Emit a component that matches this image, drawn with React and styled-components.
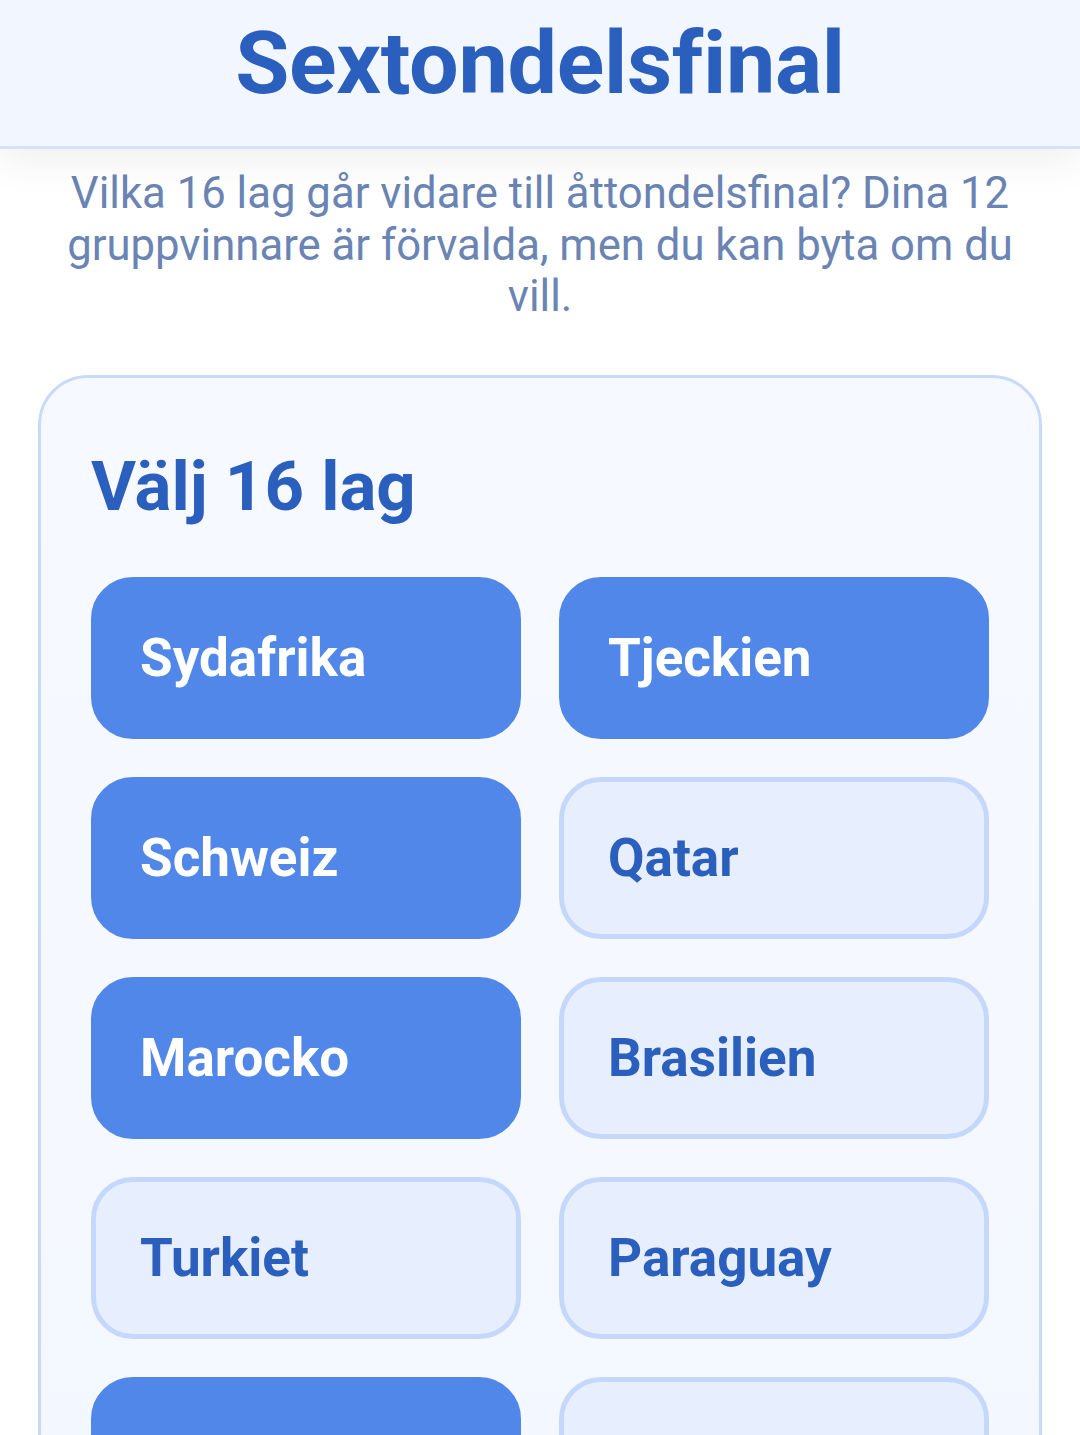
import React, { useState } from "react";
import styled, { createGlobalStyle } from "styled-components";

const Global = createGlobalStyle`
  html, body { margin: 0; padding: 0; background: #ffffff; }
  body { font-family: Roboto, "Noto Sans", "Liberation Sans", sans-serif; -webkit-font-smoothing: antialiased; }
  * { box-sizing: border-box; }
`;

const Page = styled.div`
  display: flex;
  flex-direction: column;
  min-height: 1435px;
  overflow: hidden;
`;

const Header = styled.header`
  position: relative;
  z-index: 1;
  background: #f2f7ff;
  border-bottom: 3px solid #d5e3fa;
  padding: 11px 20px 32px;
  box-shadow: 0 10px 40px rgba(0, 0, 0, 0.07);
  display: flex;
  justify-content: center;
`;

const Title = styled.h1`
  margin: 0;
  font-size: 88px;
  font-weight: 700;
  line-height: normal;
  color: #2b5fbd;
  letter-spacing: -0.3px;
`;

const Intro = styled.p`
  margin: 19px 0 0;
  padding: 0 44px;
  font-size: 43.7px;
  line-height: 51.5px;
  font-weight: 400;
  color: #6a84b3;
  text-align: center;
`;

const Card = styled.section`
  margin: 52px 38px 0;
  background: linear-gradient(#f6f9ff, #f3f7ff);
  border: 3px solid #c7dafb;
  border-radius: 50px;
  padding: 68px 50px 50px;
`;

const CardTitle = styled.h2`
  margin: 0 0 50px;
  font-size: 69px;
  font-weight: 700;
  line-height: normal;
  color: #2b5fbd;
`;

const Grid = styled.div`
  display: grid;
  grid-template-columns: minmax(0, 1fr) minmax(0, 1fr);
  gap: 38px;
`;

const TeamButton = styled.button`
  min-width: 0;
  height: 162px;
  border-radius: 42px;
  border: 5.5px solid ${(p) => (p.$selected ? "#5087e8" : "#c5d8fb")};
  background: ${(p) => (p.$selected ? "#5087e8" : "#e7effe")};
  color: ${(p) => (p.$selected ? "#ffffff" : "#2b5fbd")};
  font-family: inherit;
  font-size: 53px;
  font-weight: 700;
  text-align: left;
  padding: 0 44px;
  cursor: pointer;
  display: flex;
  align-items: center;
  overflow: hidden;
  white-space: nowrap;
`;

const teams = [
  { name: "Sydafrika", selected: true },
  { name: "Tjeckien", selected: true },
  { name: "Schweiz", selected: true },
  { name: "Qatar", selected: false },
  { name: "Marocko", selected: true },
  { name: "Brasilien", selected: false },
  { name: "Turkiet", selected: false },
  { name: "Paraguay", selected: false },
  { name: "Tyskland", selected: true },
  { name: "Ecuador", selected: false },
  { name: "Spanien", selected: true },
  { name: "Japan", selected: false },
];

export default function App() {
  const [state, setState] = useState(teams);
  const toggle = (i) =>
    setState((s) => s.map((t, j) => (j === i ? { ...t, selected: !t.selected } : t)));
  return (
    <Page>
      <Global />
      <Header>
        <Title>Sextondelsfinal</Title>
      </Header>
      <Intro>
        Vilka 16 lag går vidare till åttondelsfinal? Dina 12 gruppvinnare är förvalda, men du kan byta om du vill.
      </Intro>
      <Card>
        <CardTitle>Välj 16 lag</CardTitle>
        <Grid>
          {state.map((t, i) => (
            <TeamButton key={t.name} $selected={t.selected} onClick={() => toggle(i)}>
              {t.name}
            </TeamButton>
          ))}
        </Grid>
      </Card>
    </Page>
  );
}
